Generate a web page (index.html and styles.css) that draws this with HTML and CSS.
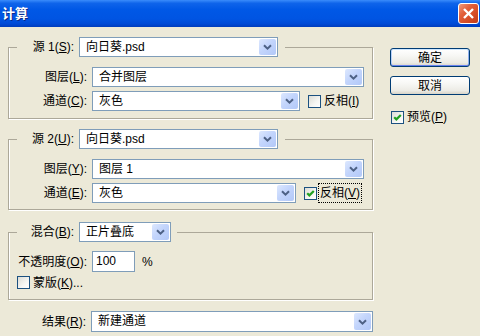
FILE: index.html
```html
<!DOCTYPE html>
<html lang="zh">
<head>
  <meta charset="UTF-8">
  <title>计算</title>
  <link rel="stylesheet" href="styles.css">
</head>
<body>
  <div class="titlebar">
    <span class="title">计算</span>
    <button class="close">
      <svg width="13" height="13" viewBox="0 0 13 13"><path d="M2 2L11 11M11 2L2 11" stroke="#fff" stroke-width="2.4" /></svg>
    </button>
  </div>
  <div class="content">
    <div class="main">
      <fieldset class="group g1">
        <legend>
          <div class="legend-row">
            <label class="lbl">源 1(<u>S</u>):</label>
            <div class="combo w-src"><span>向日葵.psd</span><i class="drop"><svg width="9" height="6" viewBox="0 0 9 6"><path d="M1 1.2L4.5 4.6L8 1.2" fill="none" stroke="#4d6185" stroke-width="2" /></svg></i></div>
          </div>
        </legend>
        <div class="row">
          <label class="lbl">图层(<u>L</u>):</label>
          <div class="combo w-full"><span>合并图层</span><i class="drop"><svg width="9" height="6" viewBox="0 0 9 6"><path d="M1 1.2L4.5 4.6L8 1.2" fill="none" stroke="#4d6185" stroke-width="2" /></svg></i></div>
        </div>
        <div class="row">
          <label class="lbl">通道(<u>C</u>):</label>
          <div class="combo w-chan1"><span>灰色</span><i class="drop"><svg width="9" height="6" viewBox="0 0 9 6"><path d="M1 1.2L4.5 4.6L8 1.2" fill="none" stroke="#4d6185" stroke-width="2" /></svg></i></div>
          <label class="check"><span class="box"></span>反相(<u>I</u>)</label>
        </div>
      </fieldset>

      <fieldset class="group g2">
        <legend>
          <div class="legend-row">
            <label class="lbl">源 2(<u>U</u>):</label>
            <div class="combo w-src"><span>向日葵.psd</span><i class="drop"><svg width="9" height="6" viewBox="0 0 9 6"><path d="M1 1.2L4.5 4.6L8 1.2" fill="none" stroke="#4d6185" stroke-width="2" /></svg></i></div>
          </div>
        </legend>
        <div class="row">
          <label class="lbl">图层(<u>Y</u>):</label>
          <div class="combo w-full"><span>图层 1</span><i class="drop"><svg width="9" height="6" viewBox="0 0 9 6"><path d="M1 1.2L4.5 4.6L8 1.2" fill="none" stroke="#4d6185" stroke-width="2" /></svg></i></div>
        </div>
        <div class="row">
          <label class="lbl">通道(<u>E</u>):</label>
          <div class="combo w-chan2"><span>灰色</span><i class="drop"><svg width="9" height="6" viewBox="0 0 9 6"><path d="M1 1.2L4.5 4.6L8 1.2" fill="none" stroke="#4d6185" stroke-width="2" /></svg></i></div>
          <label class="check"><span class="box"><svg width="11" height="11" viewBox="0 0 11 11"><path d="M2.2 5.2L4.4 7.4L8.8 3" fill="none" stroke="#21a121" stroke-width="2.2" /></svg></span><span class="focus">反相(<u>V</u>)</span></label>
        </div>
      </fieldset>

      <fieldset class="group g3">
        <legend>
          <div class="legend-row">
            <label class="lbl">混合(<u>B</u>):</label>
            <div class="combo w-blend"><span>正片叠底</span><i class="drop"><svg width="9" height="6" viewBox="0 0 9 6"><path d="M1 1.2L4.5 4.6L8 1.2" fill="none" stroke="#4d6185" stroke-width="2" /></svg></i></div>
          </div>
        </legend>
        <div class="row row-tall">
          <label class="lbl">不透明度(<u>O</u>):</label>
          <div class="field">100</div>
          <span class="unit">%</span>
        </div>
        <div class="row row-mask">
          <label class="check"><span class="box"></span>蒙版(<u>K</u>)...</label>
        </div>
      </fieldset>

      <div class="row row-tall result">
        <label class="lbl">结果(<u>R</u>):</label>
        <div class="combo w-result"><span>新建通道</span><i class="drop"><svg width="9" height="6" viewBox="0 0 9 6"><path d="M1 1.2L4.5 4.6L8 1.2" fill="none" stroke="#4d6185" stroke-width="2" /></svg></i></div>
      </div>
    </div>

    <div class="side">
      <button class="btn default">确定</button>
      <button class="btn">取消</button>
      <label class="check preview"><span class="box"><svg width="11" height="11" viewBox="0 0 11 11"><path d="M2.2 5.2L4.4 7.4L8.8 3" fill="none" stroke="#21a121" stroke-width="2.2" /></svg></span>预览(<u>P</u>)</label>
    </div>
  </div>
</body>
</html>
```

FILE: styles.css
```css
* {
  box-sizing: border-box;
}

body {
  margin: 0;
  width: 480px;
  height: 336px;
  overflow: hidden;
  background-color: #ece9d8;
  color: #000000;
  font-family: "Liberation Sans", "Noto Sans CJK SC", sans-serif;
  font-size: 12px;
  line-height: 16px;
}

u {
  text-decoration: underline;
  text-underline-offset: 1px;
}

/* title bar */
.titlebar {
  height: 27px;
  display: flex;
  align-items: center;
  justify-content: space-between;
  padding: 0 1px 0 2px;
  background: linear-gradient(#3a8cfb 0%, #0f64ea 12%, #0058e6 35%, #0054e2 70%, #004ad6 88%, #003cbc 100%);
}

.title {
  color: #ffffff;
  font-weight: bold;
  font-size: 13px;
  text-shadow: 1px 1px 0 #0a2a8a;
}

.close {
  width: 21px;
  height: 21px;
  padding: 0;
  border: 1px solid #ffffff;
  border-radius: 3px;
  background: linear-gradient(135deg, #f09a7c 0%, #e2603b 35%, #d44a24 70%, #c23c1a 100%);
  display: flex;
  align-items: center;
  justify-content: center;
}

/* layout */
.content {
  display: flex;
  align-items: flex-start;
  padding: 10px 0 0 8px;
}

.main {
  width: 365px;
}

.side {
  margin-left: 17px;
  padding-top: 11px;
  display: flex;
  flex-direction: column;
  align-items: flex-start;
}

/* group boxes */
.group {
  margin: 0;
  min-width: 0;
  padding: 10px 0 7px;
  border: 1px solid #aca899;
  box-shadow: 1px 1px 0 #ffffff, inset 1px 0 0 #ffffff;
}

.g2 {
  margin-top: 10px;
  padding-bottom: 6px;
}

.g3 {
  margin-top: 12px;
  padding-top: 9px;
  padding-bottom: 8px;
}

.group legend {
  margin-left: 8px;
  padding: 0 7px 0 0;
}

.g3 legend {
  padding-right: 6px;
}

.legend-row {
  display: flex;
  align-items: center;
  height: 20px;
}

.legend-row .lbl {
  width: 57px;
}

.lbl {
  text-align: right;
  margin-right: 5px;
  white-space: nowrap;
}

.row {
  display: flex;
  align-items: center;
  height: 20px;
}

.row .lbl {
  width: 78px;
}

.row + .row {
  margin-top: 4px;
}

.row-tall {
  height: 21px;
}

.row.row-mask {
  margin-top: 2px;
  height: 17px;
  padding-left: 8px;
}

.result {
  margin-top: 11px;
}

/* combo boxes */
.combo {
  display: flex;
  height: 20px;
  border: 1px solid #7f9db9;
  background-color: #ffffff;
}

.row-tall .combo {
  height: 21px;
}

.combo span {
  flex: 1;
  padding-left: 6px;
  line-height: 18px;
  white-space: nowrap;
}

.drop {
  width: 17px;
  margin: 1px;
  border-radius: 2px;
  background: linear-gradient(135deg, #dde8fe 0%, #c3d5fc 45%, #b2c8f8 100%);
  display: flex;
  align-items: center;
  justify-content: center;
}

.w-src {
  width: 199px;
}

.w-full {
  width: 272px;
}

.w-chan1 {
  width: 208px;
}

.w-chan2 {
  width: 204px;
}

.w-blend {
  width: 92px;
}

.w-result {
  width: 282px;
}

.field {
  width: 43px;
  height: 21px;
  border: 1px solid #7f9db9;
  background-color: #ffffff;
  padding-left: 3px;
  line-height: 19px;
}

.unit {
  margin-left: 7px;
}

/* check boxes */
.check {
  display: flex;
  align-items: center;
  margin-left: 8px;
  white-space: nowrap;
}

.row-mask .check {
  margin-left: 0;
}

.box {
  width: 13px;
  height: 13px;
  margin-right: 3px;
  border: 1px solid #1c5180;
  background: linear-gradient(135deg, #dcdcd5 0%, #f6f6f3 60%, #ffffff 100%);
  display: flex;
  align-items: center;
  justify-content: center;
}

.focus {
  margin-left: -2px;
  padding: 1px 1px;
  border: 1px dotted #000000;
}

/* buttons */
.btn {
  width: 80px;
  height: 19px;
  padding: 0;
  border: 1px solid #003c74;
  border-radius: 3px;
  background: linear-gradient(#ffffff 0%, #f7f7f4 40%, #ecebe5 80%, #d8d4c8 100%);
  font: inherit;
  color: #000000;
}

.btn + .btn {
  margin-top: 9px;
}

.btn.default {
  box-shadow: inset 0 1px 0 #cee7ff, inset 0 -1px 0 #6982ee, inset 1px 0 0 #b9d1fa, inset -1px 0 0 #8fb0ee;
}

.preview {
  margin-left: 1px;
  margin-top: 14px;
}
```
